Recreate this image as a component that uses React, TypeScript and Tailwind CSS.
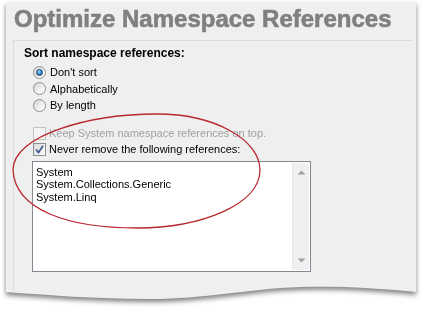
const SORT_OPTIONS = [
  { key: 'none', label: "Don't sort", checked: true },
  { key: 'alpha', label: 'Alphabetically', checked: false },
  { key: 'length', label: 'By length', checked: false },
]

const KEPT_REFERENCES = ['System', 'System.Collections.Generic', 'System.Linq']

function Radio({ checked }: { checked: boolean }) {
  return (
    <span className="w-[13px] h-[13px] rounded-full border border-[#8e8f8f] bg-[linear-gradient(135deg,#d4d4d4,#f7f7f7_70%,#ffffff)] flex items-center justify-center shrink-0">
      {checked && (
        <span className="w-[7px] h-[7px] rounded-full border border-[#17406b] bg-[radial-gradient(circle_at_40%_35%,#a9e4ff,#2b86cf_55%,#0e4a86)]" />
      )}
    </span>
  )
}

function Checkbox({ checked, disabled }: { checked: boolean; disabled?: boolean }) {
  return (
    <span
      className={
        disabled
          ? 'w-[13px] h-[13px] border border-[#c4c4c4] bg-[#f4f4f4] shrink-0'
          : 'w-[13px] h-[13px] border border-[#8e8f8f] bg-[linear-gradient(135deg,#dcdcdc,#fbfbfb)] flex items-center justify-center shrink-0'
      }
    >
      {checked && (
        <svg width="9" height="9" viewBox="0 0 9 9">
          <path d="M1 4.5 L3.5 7.5 L8 0.8" fill="none" stroke="#3d5b8c" strokeWidth="1.7" />
        </svg>
      )}
    </span>
  )
}

export default function App() {
  return (
    <div className="relative w-[434px] h-[314px] bg-white overflow-hidden pt-[2px] pl-[6px] font-['Liberation_Sans',Arial,sans-serif]">
      <div className="w-[410px] drop-shadow-[0_3px_2.5px_rgba(0,0,0,0.5)]">
        <div className="bg-[#efefef] h-[283px] flex flex-col">
          <h1 className="h-[38px] pt-[3px] pl-[8px] text-[24px] leading-[28px] font-bold text-[#808080] [-webkit-text-stroke:0.6px_#808080]">
            Optimize Namespace References
          </h1>
          <div className="flex-1 ml-[7px] mr-[3px] border-l border-t border-[#d3dee6] pl-[10px] pt-[4px]">
            <p className="text-[12px] leading-[16px] font-bold text-black">Sort namespace references:</p>
            <div className="mt-[3px] ml-[9px] flex flex-col">
              {SORT_OPTIONS.map((opt) => (
                <label key={opt.key} className="h-[16.5px] flex items-center gap-[4px] text-[11px] text-black">
                  <Radio checked={opt.checked} />
                  <span>{opt.label}</span>
                </label>
              ))}
            </div>
            <div className="mt-[12px] ml-[9px] flex flex-col">
              <label className="h-[16px] flex items-center gap-[3px] text-[11px] text-[#a0a0a0]">
                <Checkbox checked={false} disabled />
                <span>Keep System namespace references on top.</span>
              </label>
              <label className="h-[16px] flex items-center gap-[3px] text-[11px] text-black">
                <Checkbox checked />
                <span>Never remove the following references:</span>
              </label>
            </div>
            <div className="mt-[3px] ml-[8px] w-[279px] h-[111px] border border-[#828790] bg-white flex">
              <div className="flex-1 pl-[3px] pt-[4px] text-[11px] leading-[12.5px] text-black">
                {KEPT_REFERENCES.map((ref) => (
                  <div key={ref}>{ref}</div>
                ))}
              </div>
              <div className="w-[17px] my-[1px] mr-[1px] bg-[#f0f0f0] border-l border-[#e6e6e6] flex flex-col items-center justify-between py-[7px]">
                <svg width="9" height="5" viewBox="0 0 9 5">
                  <path d="M0.5 4.5 L4.5 0.5 L8.5 4.5 Z" fill="#a3a3a3" />
                </svg>
                <svg width="9" height="5" viewBox="0 0 9 5">
                  <path d="M0.5 0.5 L4.5 4.5 L8.5 0.5 Z" fill="#a3a3a3" />
                </svg>
              </div>
            </div>
          </div>
        </div>
        <svg width="410" height="16" viewBox="0 0 410 16" className="block">
          <path
            d="M0 0 H410 V7 C370 3 335 1 294 2 C240 4 200 14 144 14 C90 14 40 10 0 7 Z"
            fill="#efefef"
          />
          <line x1="7.5" y1="0" x2="7.5" y2="7.5" stroke="#d3dee6" strokeWidth="1" />
        </svg>
      </div>
      <svg width="434" height="314" viewBox="0 0 434 314" className="absolute left-0 top-0 pointer-events-none">
        <path
          d="M13 170 C13 135 90 114 157 114 C215 114 260 140 260 170 C260 205 200 228 137 228 C68 228 15 210 13 170 Z"
          fill="none"
          stroke="#b8282e"
          strokeWidth="1.3"
        />
      </svg>
    </div>
  )
}
